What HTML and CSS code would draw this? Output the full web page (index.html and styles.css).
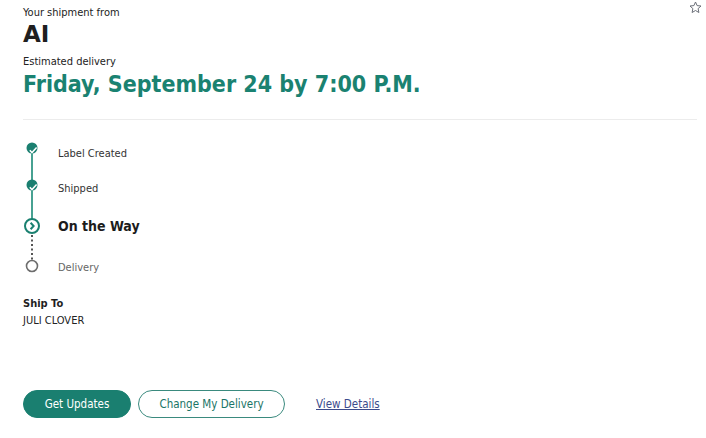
FILE: index.html
```html
<!DOCTYPE html>
<html>
<head>
<meta charset="utf-8">
<link rel="stylesheet" href="styles.css">
</head>
<body>
<main class="card">
  <header class="head">
    <div class="head-text">
      <p class="eyebrow">Your shipment from</p>
      <h1 class="sender">AI</h1>
      <p class="eyebrow est">Estimated delivery</p>
      <h2 class="eta">Friday, September 24 by 7:00 P.M.</h2>
    </div>
    <svg class="star" width="13" height="13" viewBox="0 0 13 13" aria-hidden="true">
      <path d="M6.5 1 L8.1 4.6 L12 5 L9.1 7.6 L9.9 11.5 L6.5 9.5 L3.1 11.5 L3.9 7.6 L1 5 L4.9 4.6 Z" fill="none" stroke="#6b6f78" stroke-width="1" stroke-linejoin="round"/>
    </svg>
  </header>
  <hr class="rule">
  <section class="timeline">
    <svg class="rail" width="18" height="146" viewBox="0 0 18 146" aria-hidden="true">
      <line x1="9" y1="12" x2="9" y2="83" stroke="#47a192" stroke-width="2"/>
      <circle cx="9" cy="12" r="5.5" fill="#1a7f70"/>
      <path d="M6.8 14.2 L9 16.6 L13.6 11.6" fill="none" stroke="#fff" stroke-width="1.5"/>
      <circle cx="9" cy="49" r="5.5" fill="#1a7f70"/>
      <path d="M6.8 51.2 L9 53.6 L13.6 48.6" fill="none" stroke="#fff" stroke-width="1.5"/>
      <circle cx="9" cy="90" r="7" fill="#fff" stroke="#1a8070" stroke-width="2"/>
      <path d="M7.6 86.8 L10.6 90 L7.6 93.2" fill="none" stroke="#1a8070" stroke-width="2"/>
      <line x1="9" y1="99" x2="9" y2="124" stroke="#555" stroke-width="2" stroke-dasharray="2 2.5"/>
      <circle cx="9" cy="130" r="5.5" fill="#fff" stroke="#6d6d6d" stroke-width="1.6"/>
    </svg>
    <ol class="steps">
      <li class="step done">Label Created</li>
      <li class="step done">Shipped</li>
      <li class="step current">On the Way</li>
      <li class="step todo">Delivery</li>
    </ol>
  </section>
  <section class="ship-to">
    <h3 class="ship-label">Ship To</h3>
    <p class="ship-name">JULI CLOVER</p>
  </section>
  <nav class="actions">
    <button class="btn btn-primary">Get Updates</button>
    <button class="btn btn-outline">Change My Delivery</button>
    <a class="link" href="#">View Details</a>
  </nav>
</main>
</body>
</html>
```
FILE: styles.css
```css
html, body {
  margin: 0;
  padding: 0;
  background: #fff;
}
body {
  font-family: "DejaVu Sans Condensed", "DejaVu Sans", sans-serif;
  color: #222;
  width: 706px;
  height: 438px;
  overflow: hidden;
}
.card {
  padding: 6px 9px 0 23px;
}
.head {
  display: flex;
  justify-content: space-between;
  align-items: flex-start;
}
.star {
  margin-top: -5px;
  margin-right: -5px;
}
.eyebrow {
  margin: 0;
  font-size: 11px;
  line-height: 14px;
  color: #222;
}
.sender {
  margin: 1px 0 0;
  font-family: "DejaVu Sans", sans-serif;
  font-size: 23px;
  line-height: 26px;
  font-weight: bold;
  color: #1f1f1f;
}
.est {
  margin-top: 8px;
}
.eta {
  margin: 0;
  font-size: 23px;
  line-height: 30px;
  font-weight: bold;
  color: #1a8271;
}
.rule {
  margin: 20px 0 0;
  border: 0;
  border-top: 1px solid #ececec;
  height: 0;
}
.timeline {
  display: grid;
  grid-template-columns: 18px 1fr;
  column-gap: 17px;
  margin-top: 16px;
}
.rail {
  display: block;
}
.steps {
  list-style: none;
  margin: 0;
  padding: 0;
}
.step {
  display: flex;
  align-items: center;
  font-size: 11px;
  color: #333;
}
.step:nth-child(1) { height: 35px; }
.step:nth-child(2) { height: 35px; }
.step:nth-child(3) { height: 40px; }
.step:nth-child(4) { height: 42px; }
.step.current {
  font-size: 14px;
  font-weight: bold;
  color: #1c1c1c;
}
.step.todo {
  color: #666;
}
.ship-to {
  margin-top: 9px;
}
.ship-label {
  margin: 0;
  font-size: 11px;
  line-height: 14px;
  font-weight: bold;
  color: #1f1f1f;
}
.ship-name {
  margin: 3px 0 0;
  font-size: 11px;
  line-height: 14px;
  color: #222;
}
.actions {
  display: flex;
  align-items: center;
  margin-top: 62px;
}
.btn {
  height: 28px;
  border-radius: 14px;
  font-family: inherit;
  font-size: 11.5px;
  padding: 0;
  cursor: pointer;
}
.btn-primary {
  width: 108px;
  background: #1a7f70;
  border: 1px solid #1a7f70;
  color: #fff;
}
.btn-outline {
  width: 147px;
  margin-left: 7px;
  background: #fff;
  border: 1px solid #3a8a7e;
  color: #1a7466;
}
.link {
  margin-left: 31px;
  font-size: 11.5px;
  color: #3c4b8c;
  text-decoration: underline;
}
```
